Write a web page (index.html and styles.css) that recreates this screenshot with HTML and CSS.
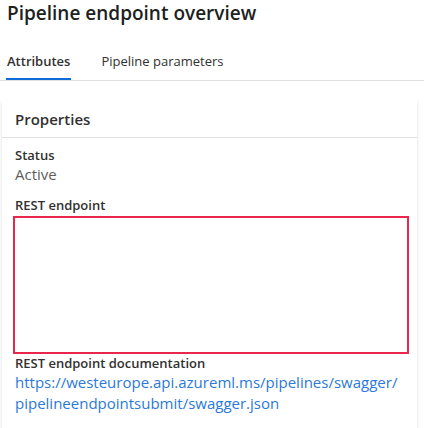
FILE: index.html
```html
<!DOCTYPE html>
<html>
<head>
    <title>Pipeline endpoint overview</title>
    <link rel="stylesheet" href="styles.css">
</head>
<body>
    <h1 class="page-title">Pipeline endpoint overview</h1>

    <div class="tabs">
        <div class="tab tab-active">Attributes</div>
        <div class="tab">Pipeline parameters</div>
    </div>

    <div class="card">
        <div class="card-header">Properties</div>
        <div class="card-body">
            <div class="field">
                <div class="field-label">Status</div>
                <div class="field-value">Active</div>
            </div>
            <div class="field field-tight">
                <div class="field-label">REST endpoint</div>
                <div class="redacted"></div>
            </div>
            <div class="field">
                <div class="field-label">REST endpoint documentation</div>
                <a class="field-link" href="#">https://westeurope.api.azureml.ms/pipelines/swagger/<br>pipelineendpointsubmit/swagger.json</a>
            </div>
        </div>
    </div>
</body>
</html>
```

FILE: styles.css
```css
body {
    margin: 0;
    padding: 0;
    font-family: "Open Sans", "Noto Sans", sans-serif;
    color: #323130;
    background-color: #fff;
}

.page-title {
    margin: 0;
    padding: 0 0 0 7px;
    font-size: 19px;
    font-weight: 600;
    line-height: 26px;
    color: #201f1e;
}

.tabs {
    display: flex;
    margin-top: 19px;
    padding-left: 6px;
    border-bottom: 1px solid #e1dfdd;
}

.tab {
    font-size: 13px;
    line-height: 33px;
    margin-right: 30px;
    border-bottom: 2px solid transparent;
}

.tab-active {
    font-weight: 600;
    padding: 0 1px;
    border-bottom-color: #0f6cd6;
}

.card {
    margin: 19px 7px 0 2px;
    background-color: #fff;
    box-shadow: 0 1.6px 3.6px rgba(0,0,0,0.13), 0 0.3px 0.9px rgba(0,0,0,0.11);
    min-height: 340px;
}

.card-header {
    padding: 9px 13px 8px;
    font-size: 15px;
    font-weight: 600;
    line-height: 20px;
    border-bottom: 1px solid #e1dfdd;
}

.card-body {
    padding: 8px 4px 0 13px;
}

.field {
    margin-bottom: 12px;
}

.field-tight {
    margin-bottom: 0;
}

.field-label {
    font-size: 13px;
    font-weight: 600;
    line-height: 18px;
}

.field-value {
    font-size: 15px;
    line-height: 20px;
    color: #605e5c;
}

.redacted {
    height: 134px;
    margin: 2px 4px 0 -2px;
    border: 2px solid #e9264b;
}

.field-link {
    display: block;
    font-size: 15px;
    line-height: 21px;
    color: #2b79d8;
    text-decoration: none;
}
```
